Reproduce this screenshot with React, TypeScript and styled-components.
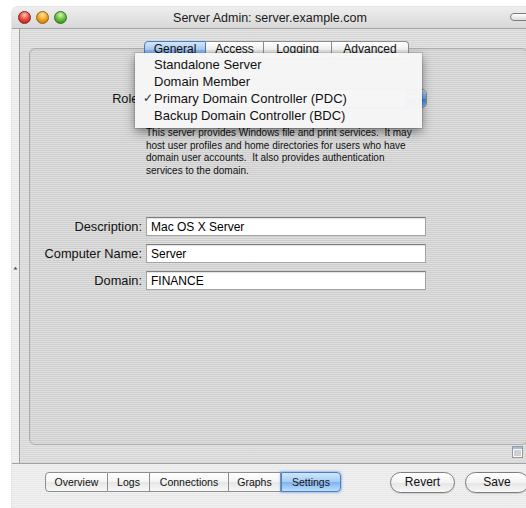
import React from "react";
import styled, { createGlobalStyle, css } from "styled-components";

const GlobalStyle = createGlobalStyle`
  html, body { margin: 0; padding: 0; background: #ffffff; overflow: hidden; }
  body { font-family: "Lucida Grande", "Liberation Sans", Arial, sans-serif; color: #000; }
`;

/* fine horizontal pinstripes of the metal window surface */
const pinstripe = css`
  background-image: repeating-linear-gradient(
    180deg,
    rgba(255, 255, 255, 0.28) 0px,
    rgba(255, 255, 255, 0.28) 1px,
    rgba(0, 0, 0, 0.02) 1px,
    rgba(0, 0, 0, 0.02) 2px
  );
`;

const Window = styled.div`
  position: relative;
  width: 524px;
  height: 501px;
  margin: 7px 0 0 12px;
  display: flex;
  flex-direction: column;
  border-radius: 6px 6px 0 0;
  background-color: #e9e9e9;
  box-shadow: 0 0 0 1px rgba(0, 0, 0, 0.1);
  overflow: hidden;
`;

const TitleBar = styled.div`
  flex: none;
  height: 21px;
  display: grid;
  grid-template-columns: 1fr auto 1fr;
  align-items: center;
  padding: 0 6px 0 6px;
  background: linear-gradient(#eeeeee, #d8d8d8);
  border-bottom: 1px solid #a2a2a2;
`;

const Lights = styled.div`
  display: flex;
  gap: 5px;
`;

const lightColors = {
  red: ["#ffc2b8", "#ee4a3e", "#a8140c", "#84231c"],
  yellow: ["#ffe9a8", "#f2a623", "#b56a00", "#946018"],
  green: ["#d6f5b0", "#66c23e", "#2d7a12", "#356f22"],
} as const;

const Light = styled.span<{ $c: keyof typeof lightColors }>`
  width: 13px;
  height: 13px;
  border-radius: 50%;
  box-sizing: border-box;
  border: 1px solid ${(p) => lightColors[p.$c][3]};
  background: radial-gradient(
    circle at 50% 28%,
    ${(p) => lightColors[p.$c][0]} 0%,
    ${(p) => lightColors[p.$c][1]} 48%,
    ${(p) => lightColors[p.$c][2]} 100%
  );
`;

const Title = styled.div`
  font-size: 12.5px;
  line-height: 15px;
  margin-top: 2px;
  color: #1a1a1a;
  white-space: nowrap;
  margin-right: 8px;
`;

const ToolbarPill = styled.span`
  justify-self: end;
  width: 20px;
  height: 8px;
  box-sizing: border-box;
  border: 1px solid #7c7c7c;
  border-radius: 5px;
  background: linear-gradient(#ffffff, #dcdcdc);
  margin-top: -1px;
`;

const Main = styled.div`
  flex: 1;
  display: flex;
  min-height: 0;
`;

const SideStrip = styled.div`
  flex: none;
  width: 8px;
  display: flex;
  justify-content: center;
  padding-top: 237px;
  box-sizing: border-box;
  background-color: #ededed;
  ${pinstripe};
  border-right: 1px solid #a0a0a0;
`;

const ContentArea = styled.div`
  flex: 1;
  display: flex;
  flex-direction: column;
  padding: 19px 8px 0 9px;
  background-color: #d9d9d9;
  ${pinstripe};
`;

const TabBox = styled.div`
  flex: 1;
  display: flex;
  flex-direction: column;
  border: 1px solid #acacac;
  border-radius: 6px;
  background-color: #d2d2d2;
  ${pinstripe};
  box-shadow: inset 0 1px 2px rgba(0, 0, 0, 0.06);
`;

const TabRow = styled.div`
  display: flex;
  margin-top: -8px;
  padding-left: 114px;
`;

const Tab = styled.div<{ $w: number; $on?: boolean }>`
  width: ${(p) => p.$w}px;
  height: 18px;
  box-sizing: border-box;
  font-size: 12px;
  line-height: 14px;
  text-align: center;
  color: #111;
  border: 1px solid ${(p) => (p.$on ? "#4b7ebf" : "#8c8c8c")};
  border-left-width: 0;
  background: ${(p) =>
    p.$on
      ? "linear-gradient(#d3e6fa, #a9cbf2 50%, #7fb2ee 51%, #b9d8fa)"
      : "linear-gradient(#ffffff, #f2f2f2 50%, #e3e3e3 51%, #f5f5f5)"};
  &:first-child {
    border-left-width: 1px;
    border-radius: 4px 0 0 4px;
  }
  &:last-child {
    border-radius: 0 4px 4px 0;
  }
`;

const FormGrid = styled.div`
  display: grid;
  grid-template-columns: 112px 280px;
  column-gap: 4px;
  row-gap: 8px;
  align-items: center;
`;

const RoleGrid = styled(FormGrid)`
  margin-top: 30px;
  grid-template-columns: 112px 281px;
`;

const Label = styled.label`
  font-size: 12.8px;
  text-align: right;
  color: #111;
  white-space: nowrap;
`;

const Popup = styled.div`
  height: 19px;
  box-sizing: border-box;
  display: flex;
  border: 1px solid #8a8a8a;
  border-radius: 5px;
  overflow: hidden;
  background: linear-gradient(#ffffff, #f0f0f0 50%, #e4e4e4 51%, #f6f6f6);
`;

const PopupBody = styled.span`
  flex: 1;
`;

const PopupArrows = styled.span`
  width: 19px;
  display: flex;
  align-items: center;
  justify-content: center;
  background: linear-gradient(#bcd8f7, #6ea6ea 50%, #3f86e0 51%, #7fb8f4);
  border-left: 1px solid #4a7cbf;
`;

const Blurb = styled.div`
  margin: 19px 0 0 116px;
  font-size: 10px;
  line-height: 12.7px;
  color: #111;
`;

const BlurbLine = styled.div`
  white-space: pre;
`;

const FieldsGrid = styled(FormGrid)`
  margin-top: 39px;
`;

const Field = styled.div`
  height: 19px;
  box-sizing: border-box;
  border: 1px solid #a4a4a4;
  border-top-color: #7e7e7e;
  background: #ffffff;
  box-shadow: inset 0 1px 1px rgba(0, 0, 0, 0.12);
  font-size: 12px;
  line-height: 18px;
  padding-left: 4px;
  color: #000;
`;

const ContentFooter = styled.div`
  flex: none;
  height: 18px;
  display: flex;
  justify-content: flex-end;
  align-items: flex-start;
  padding: 1px 5px 0 0;
  box-sizing: border-box;
`;

const BottomBar = styled.div`
  flex: none;
  height: 45px;
  box-sizing: border-box;
  display: flex;
  align-items: flex-start;
  padding: 8px 0 0 33px;
  border-top: 1px solid #a3a3a3;
  background-color: #ececec;
  ${pinstripe};
`;

const Segmented = styled.div`
  display: flex;
`;

const Segment = styled.div<{ $w: number; $on?: boolean }>`
  width: ${(p) => p.$w}px;
  height: 20px;
  box-sizing: border-box;
  font-size: 10.5px;
  line-height: 18px;
  text-align: center;
  color: #111;
  border: 1px solid ${(p) => (p.$on ? "#4a7fc2" : "#8e8e8e")};
  border-left-width: ${(p) => (p.$on ? 1 : 0)}px;
  background: ${(p) =>
    p.$on
      ? "linear-gradient(#d0e6fb, #a4cbf4 50%, #7cb4f0 51%, #bfdefc)"
      : "linear-gradient(#ffffff, #f4f4f4 50%, #e6e6e6 51%, #f7f7f7)"};
  box-shadow: ${(p) => (p.$on ? "0 0 2px 1px rgba(90, 150, 230, 0.55)" : "none")};
  position: ${(p) => (p.$on ? "relative" : "static")};
  &:first-child {
    border-left-width: 1px;
    border-radius: 4px 0 0 4px;
  }
  &:last-child {
    border-radius: 0 4px 4px 0;
  }
`;

const PushButton = styled.div<{ $w: number; $gap: number }>`
  width: ${(p) => p.$w}px;
  height: 21px;
  margin-left: ${(p) => p.$gap}px;
  box-sizing: border-box;
  border: 1px solid #7d7d7d;
  border-radius: 11px;
  background: linear-gradient(#ffffff, #f3f3f3 50%, #e4e4e4 51%, #f8f8f8);
  box-shadow: 0 1px 1px rgba(0, 0, 0, 0.12);
  font-size: 12px;
  line-height: 19px;
  text-align: center;
  color: #111;
`;

/* the pulled-down role menu, floating above the tabs and the form */
const Menu = styled.div`
  position: absolute;
  left: 123px;
  top: 46px;
  width: 287px;
  box-sizing: border-box;
  padding: 3px 0 4px;
  background: rgba(246, 246, 246, 0.97);
  box-shadow: 0 4px 10px rgba(0, 0, 0, 0.45), 0 0 0 1px rgba(0, 0, 0, 0.12);
`;

const MenuItem = styled.div`
  display: flex;
  height: 17px;
  font-size: 13px;
  line-height: 17px;
  color: #111;
`;

const Check = styled.span`
  width: 19px;
  text-align: right;
  padding-right: 1px;
  box-sizing: border-box;
  font-size: 12px;
  color: #333;
`;

const roles = [
  "Standalone Server",
  "Domain Member",
  "Primary Domain Controller (PDC)",
  "Backup Domain Controller (BDC)",
];

const tabs: [string, number][] = [
  ["General", 62],
  ["Access", 58],
  ["Logging", 68],
  ["Advanced", 77],
];

const panes: [string, number][] = [
  ["Overview", 63],
  ["Logs", 42],
  ["Connections", 79],
  ["Graphs", 52],
  ["Settings", 60],
];

const blurb = [
  "This server provides Windows file and print services.  It may",
  "host user profiles and home directories for users who have",
  "domain user accounts.  It also provides authentication",
  "services to the domain.",
];

const fields: [string, string][] = [
  ["Description:", "Mac OS X Server"],
  ["Computer Name:", "Server"],
  ["Domain:", "FINANCE"],
];

function SplitHandle() {
  return (
    <svg width="5" height="4" viewBox="0 0 5 4">
      <path d="M0.5 3.5 L2.5 0.8 L4.5 3.5 Z" fill="#555" />
    </svg>
  );
}

function ListIcon() {
  return (
    <svg width="11" height="12" viewBox="0 0 11 12">
      <rect x="0.5" y="0.5" width="10" height="11" fill="#f7f7f7" stroke="#9a9a9a" />
      <rect x="1" y="1" width="9" height="2" fill="#9fbfe6" />
      <line x1="2" y1="5" x2="9" y2="5" stroke="#a8a8a8" />
      <line x1="2" y1="7" x2="9" y2="7" stroke="#a8a8a8" />
      <line x1="2" y1="9" x2="9" y2="9" stroke="#a8a8a8" />
    </svg>
  );
}

function PopupArrowGlyph() {
  return (
    <svg width="7" height="11" viewBox="0 0 7 11">
      <path d="M1 4 L3.5 1 L6 4 Z M1 7 L3.5 10 L6 7 Z" fill="#ffffff" />
    </svg>
  );
}

export default function App() {
  return (
    <>
      <GlobalStyle />
      <Window>
        <TitleBar>
          <Lights>
            <Light $c="red" />
            <Light $c="yellow" />
            <Light $c="green" />
          </Lights>
          <Title>Server Admin: server.example.com</Title>
          <ToolbarPill />
        </TitleBar>

        <Main>
          <SideStrip>
            <SplitHandle />
          </SideStrip>
          <ContentArea>
            <TabBox>
              <TabRow>
                {tabs.map(([name, w], i) => (
                  <Tab key={name} $w={w} $on={i === 0}>
                    {name}
                  </Tab>
                ))}
              </TabRow>

              <RoleGrid>
                <Label>Role:</Label>
                <Popup>
                  <PopupBody />
                  <PopupArrows>
                    <PopupArrowGlyph />
                  </PopupArrows>
                </Popup>
              </RoleGrid>

              <Blurb>
                {blurb.map((line) => (
                  <BlurbLine key={line}>{line}</BlurbLine>
                ))}
              </Blurb>

              <FieldsGrid>
                {fields.map(([label, value]) => (
                  <React.Fragment key={label}>
                    <Label>{label}</Label>
                    <Field>{value}</Field>
                  </React.Fragment>
                ))}
              </FieldsGrid>
            </TabBox>
            <ContentFooter>
              <ListIcon />
            </ContentFooter>
          </ContentArea>
        </Main>

        <BottomBar>
          <Segmented>
            {panes.map(([name, w]) => (
              <Segment key={name} $w={w} $on={name === "Settings"}>
                {name}
              </Segment>
            ))}
          </Segmented>
          <PushButton $w={65} $gap={49}>Revert</PushButton>
          <PushButton $w={64} $gap={10}>Save</PushButton>
        </BottomBar>

        <Menu>
          {roles.map((r, i) => (
            <MenuItem key={r}>
              <Check>{i === 2 ? "✓" : ""}</Check>
              {r}
            </MenuItem>
          ))}
        </Menu>
      </Window>
    </>
  );
}
